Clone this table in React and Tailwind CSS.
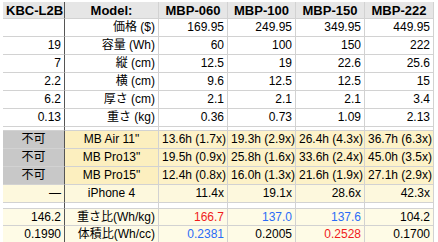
const COLS = "grid grid-cols-[62px_94px_69px_68px_69px_69px]";

const specs = [
  ["", "価格 ($)", ["169.95", "249.95", "349.95", "449.95"]],
  ["19", "容量 (Wh)", ["60", "100", "150", "222"]],
  ["7", "縦 (cm)", ["12.5", "19", "22.6", "25.6"]],
  ["2.2", "横 (cm)", ["9.6", "12.5", "12.5", "15"]],
  ["6.2", "厚さ (cm)", ["2.1", "2.1", "2.1", "3.4"]],
  ["0.13", "重さ (kg)", ["0.36", "0.73", "1.09", "2.13"]],
];

const laptops = [
  ["MB Air 11\"", ["13.6h (1.7x)", "19.3h (2.9x)", "26.4h (4.3x)", "36.7h (6.3x)"]],
  ["MB Pro13\"", ["19.5h (0.9x)", "25.8h (1.6x)", "33.6h (2.4x)", "45.0h (3.5x)"]],
  ["MB Pro15\"", ["12.4h (0.8x)", "16.0h (1.3x)", "21.6h (1.9x)", "27.1h (2.9x)"]],
];

const ratios = [
  ["146.2", "重さ比(Wh/kg)", [["166.7", "red"], ["137.0", "blue"], ["137.6", "blue"], ["104.2", ""]]],
  ["0.1990", "体積比(Wh/cc)", [["0.2381", "blue"], ["0.2005", ""], ["0.2528", "red"], ["0.1700", ""]]],
];

const tone = { red: "text-[#f01c1c]", blue: "text-[#2a6cf6]", "": "text-black" };

function Cell({ className = "", children }) {
  return (
    <div className={`h-[18px] leading-[17px] border-b border-r border-[#d2d2d2] px-[3px] whitespace-nowrap overflow-hidden ${className}`}>
      {children}
    </div>
  );
}

function Spacer({ h }) {
  return (
    <div className={COLS}>
      {[0, 1, 2, 3, 4, 5].map(i => (
        <div key={i} className={`${h} border-b border-r border-[#d2d2d2] ${i === 0 ? "border-r-[#555]" : ""}`} />
      ))}
    </div>
  );
}

export default function App() {
  return (
    <div
      className="w-[438px] h-[242px] overflow-hidden bg-white pt-[2px] pl-[3px] text-[12px] text-black"
      style={{ fontFamily: '"Liberation Sans", Arial, "Noto Sans CJK JP", sans-serif' }}
    >
      {/* header */}
      <div className={`${COLS} font-bold text-[13px]`}>
        <Cell className="!h-[17px] bg-[#e6e6e6] border-r-[#555] border-[#c4c4c4] text-center">KBC-L2B</Cell>
        <Cell className="!h-[17px] bg-[#e6e6e6] border-[#c4c4c4] text-center">Model:</Cell>
        {["MBP-060", "MBP-100", "MBP-150", "MBP-222"].map(m => (
          <Cell key={m} className="!h-[17px] bg-[#e6e6e6] border-[#c4c4c4] text-center">{m}</Cell>
        ))}
      </div>

      {/* specs */}
      {specs.map(([kbc, label, vals]) => (
        <div key={label} className={COLS}>
          <Cell className="text-right border-r-[#555]">{kbc}</Cell>
          <Cell className="text-right">{label}</Cell>
          {vals.map((v, i) => <Cell key={i} className="text-right">{v}</Cell>)}
        </div>
      ))}

      <Spacer h="h-[4px]" />

      {/* runtime vs laptops */}
      {laptops.map(([name, vals]) => (
        <div key={name} className={COLS}>
          <Cell className="bg-[#c8c8c8] text-center border-r-[#555]">不可</Cell>
          <Cell className="bg-[#fcefbf] text-center">{name}</Cell>
          {vals.map((v, i) => <Cell key={i} className="bg-[#fdf2c8] text-center">{v}</Cell>)}
        </div>
      ))}

      <div className={COLS}>
        <Cell className="bg-[#fdf8dd] text-right border-r-[#555]">—</Cell>
        <Cell className="bg-[#fdf8dd] text-center">iPhone 4</Cell>
        {["11.4x", "19.1x", "28.6x", "42.3x"].map(v => (
          <Cell key={v} className="bg-[#fdf8dd] text-right">{v}</Cell>
        ))}
      </div>

      <Spacer h="h-[6px]" />

      {/* ratios */}
      {ratios.map(([kbc, label, vals]) => (
        <div key={label} className={COLS}>
          <Cell className="!h-[17px] bg-[#fefbe6] text-right border-r-[#555]">{kbc}</Cell>
          <Cell className="!h-[17px] bg-[#fefbe6] text-right">{label}</Cell>
          {vals.map(([v, c], i) => (
            <Cell key={i} className={`!h-[17px] bg-[#fefbe6] text-right ${tone[c]}`}>{v}</Cell>
          ))}
        </div>
      ))}
    </div>
  );
}
